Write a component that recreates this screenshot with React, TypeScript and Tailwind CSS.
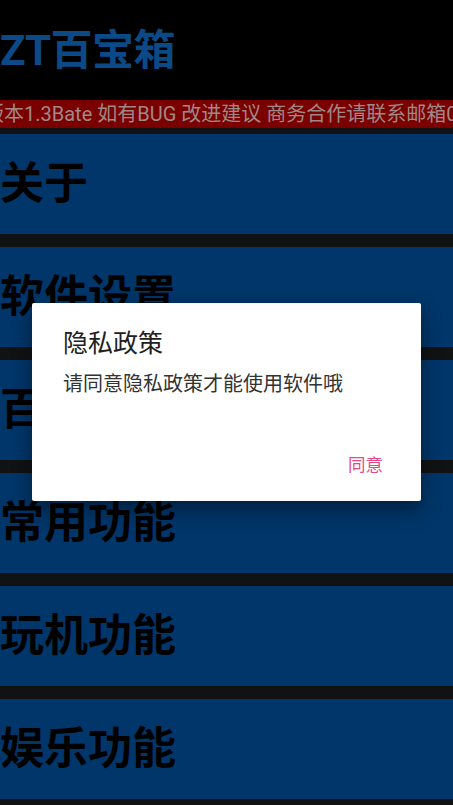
import React from "react";

const items = ["关于", "软件设置", "百宝箱", "常用功能", "玩机功能", "娱乐功能"];

export default function App() {
  return (
    <div
      className="relative w-[453px] h-[805px] overflow-hidden bg-[#111214]"
      style={{ fontFamily: 'Roboto, "Noto Sans CJK SC", sans-serif' }}
    >
      {/* header */}
      <div className="h-[100px] bg-black flex items-center pt-[2px]">
        <span className="text-[42px] font-bold leading-none text-[#0b4a86] tracking-[-0.5px]">ZT百宝箱</span>
      </div>

      {/* notice marquee */}
      <div className="h-[28px] bg-[#7a0000] flex items-center overflow-hidden">
        <span className="ml-[-16px] whitespace-nowrap text-[20px] leading-none text-[#a08888]">
          版本1.3Bate 如有BUG 改进建议 商务合作请联系邮箱0
        </span>
      </div>

      {/* menu */}
      <div className="flex flex-col gap-[13px] pt-[6px]">
        {items.map((t) => (
          <div key={t} className="h-[100px] bg-[#00366a] flex items-center">
            <span className="text-[44px] font-bold leading-none text-black">{t}</span>
          </div>
        ))}
      </div>

      {/* dialog */}
      <div className="absolute left-[32px] top-[303px] w-[389px] h-[198px] bg-white rounded-[2px] shadow-[0_8px_20px_rgba(0,0,0,0.45)] flex flex-col">
        <div className="pt-[25px] px-[31px]">
          <div className="text-[25px] leading-[32px] text-[#212121]">隐私政策</div>
          <div className="mt-[10px] text-[20px] leading-[28px] text-[#333333]">请同意隐私政策才能使用软件哦</div>
        </div>
        <div className="mt-auto flex justify-end pr-[30px] pb-[17px]">
          <button className="h-[36px] px-[8px] text-[17.5px] text-[#e64a86] leading-none">同意</button>
        </div>
      </div>
    </div>
  );
}
